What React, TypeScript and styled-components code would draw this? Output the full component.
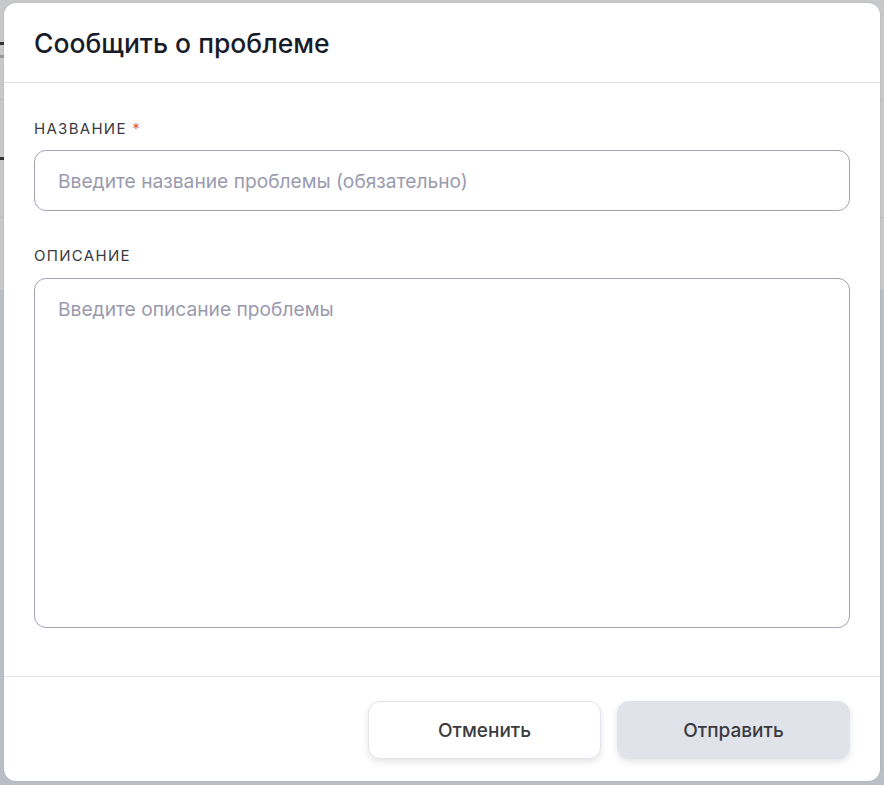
import React from "react";
import styled, { createGlobalStyle } from "styled-components";

const Global = createGlobalStyle`
  html, body { margin: 0; padding: 0; }
  body { font-family: Inter, "Noto Sans", sans-serif; background: #c7c8ca; }
  * { box-sizing: border-box; }
`;

const Page = styled.div`
  position: relative;
  width: 884px;
  height: 785px;
  overflow: hidden;
  background: #c7c8ca;
`;

const BackTop = styled.div`
  height: 290px;
  display: flex;
  flex-direction: column;
`;

const BackRow = styled.div<{ $h: number }>`
  height: ${(p) => p.$h}px;
  border-bottom: 1px solid #bcbdc1;
  display: flex;
  flex-direction: column;
  justify-content: center;
  gap: 10px;
`;

const Mark = styled.div<{ $w: number; $c: string }>`
  width: ${(p) => p.$w}px;
  height: 3px;
  background: ${(p) => p.$c};
`;

const BackBottom = styled.div`
  height: 495px;
  background: #b9bec7;
`;

const Overlay = styled.div`
  position: absolute;
  inset: 0;
  padding: 3px 4px 4px 4px;
  display: flex;
`;

const Modal = styled.div`
  flex: 1;
  background: #ffffff;
  border-radius: 12px;
  display: flex;
  flex-direction: column;
  overflow: hidden;
  box-shadow: 0 0 0 1px rgba(0, 0, 0, 0.04);
`;

const Header = styled.div`
  height: 80px;
  padding: 0 30px;
  display: flex;
  align-items: center;
  border-bottom: 1px solid #e1e2e8;
`;

const Title = styled.h2`
  margin: 0;
  font-size: 26.5px;
  font-weight: 500;
  color: #171c28;
`;

const Body = styled.div`
  flex: 1;
  padding: 37px 30px 0 30px;
  display: flex;
  flex-direction: column;
`;

const Field = styled.div<{ $mt?: number }>`
  display: flex;
  flex-direction: column;
  margin-top: ${(p) => p.$mt ?? 0}px;
`;

const Label = styled.label<{ $mb: number }>`
  font-size: 15px;
  letter-spacing: 1.3px;
  color: #3a3b40;
  text-transform: uppercase;
  margin-bottom: ${(p) => p.$mb}px;
  line-height: 18px;
`;

const Req = styled.span`
  color: #e3602f;
`;

const Input = styled.input`
  height: 61px;
  border: 1px solid #a2a2b5;
  border-radius: 12px;
  padding: 0 23px;
  font-family: inherit;
  font-size: 19.2px;
  color: #222;
  outline: none;
  &::placeholder { color: #9a9aae; }
`;

const TextArea = styled.textarea`
  height: 350px;
  border: 1px solid #a2a2b5;
  border-radius: 12px;
  padding: 19px 23px;
  font-family: inherit;
  font-size: 19.2px;
  line-height: 22px;
  color: #222;
  outline: none;
  resize: none;
  &::placeholder { color: #9a9aae; }
`;

const Footer = styled.div`
  height: 105px;
  border-top: 1px solid #e1e2e8;
  display: flex;
  justify-content: flex-end;
  align-items: flex-start;
  padding: 24px 30px 0 30px;
  gap: 16px;
`;

const Button = styled.button<{ $primary?: boolean }>`
  width: 233px;
  height: 58px;
  border-radius: 12px;
  font-family: inherit;
  font-size: 19px;
  font-weight: 500;
  color: #3b3b3f;
  background: ${(p) => (p.$primary ? "#e0e3ea" : "#ffffff")};
  border: 1px solid ${(p) => (p.$primary ? "#e0e3ea" : "#e4e4ec")};
  box-shadow: 0 3px 6px rgba(30, 40, 60, 0.12);
  cursor: pointer;
`;

export default function App() {
  return (
    <>
      <Global />
      <Page>
        <BackTop>
          <BackRow $h={100}>
            <Mark $w={4} $c="#333" />
            <Mark $w={4} $c="#999" />
          </BackRow>
          <BackRow $h={118}>
            <Mark $w={4} $c="#333" />
          </BackRow>
        </BackTop>
        <BackBottom />
        <Overlay>
          <Modal>
            <Header>
              <Title>Сообщить о проблеме</Title>
            </Header>
            <Body>
              <Field>
                <Label $mb={12}>
                  Название <Req>*</Req>
                </Label>
                <Input placeholder="Введите название проблемы (обязательно)" />
              </Field>
              <Field $mt={36}>
                <Label $mb={13}>Описание</Label>
                <TextArea placeholder="Введите описание проблемы" />
              </Field>
            </Body>
            <Footer>
              <Button>Отменить</Button>
              <Button $primary>Отправить</Button>
            </Footer>
          </Modal>
        </Overlay>
      </Page>
    </>
  );
}
